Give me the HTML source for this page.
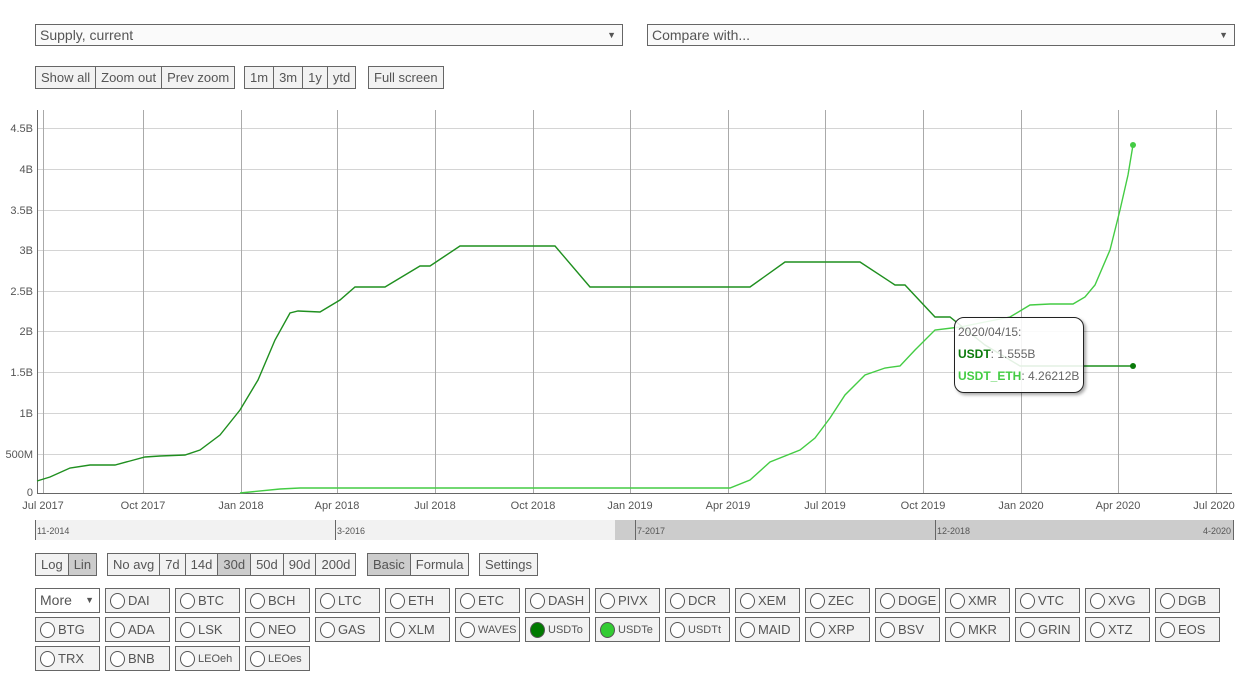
<!DOCTYPE html>
<html><head><meta charset="utf-8"><style>
*{box-sizing:border-box;margin:0;padding:0}
body{width:1256px;height:692px;background:#fff;font-family:"Liberation Sans",sans-serif;color:#555;position:relative;overflow:hidden;font-size:13px}
.a{position:absolute}
.sel{position:absolute;top:24px;height:22px;border:1px solid #666;background:#fafafa;font-size:14px;line-height:20px;padding-left:4px;color:#555}
.sel span{position:absolute;right:6px;top:0;font-size:9px}
.grp{position:absolute;display:flex;border:1px solid #666;height:23px}
.grp div{background:#f2f2f2;padding:0 5px;line-height:21px;border-left:1px solid #666;font-size:13px}
.grp div:first-child{border-left:none}
.grp div.on{background:#ccc}
.cb{position:absolute;width:65px;height:25px;border:1px solid #666;background:#f2f2f2;font-size:13px;line-height:23px;padding-left:22px}
.cb i{position:absolute;left:4px;top:4px;width:15px;height:16px;border:1px solid #555;border-radius:50%;background:#fff}
.sm{font-size:11px;line-height:24px}
</style></head><body>
<div class="sel" style="left:35px;width:588px">Supply, current<span>▼</span></div>
<div class="sel" style="left:647px;width:588px">Compare with...<span>▼</span></div>
<div class="grp" style="left:35px;top:66px"><div>Show all</div><div>Zoom out</div><div>Prev zoom</div></div>
<div class="grp" style="left:244px;top:66px"><div>1m</div><div>3m</div><div>1y</div><div>ytd</div></div>
<div class="grp" style="left:368px;top:66px"><div>Full screen</div></div>

<svg class="a" style="left:0;top:0" width="1256" height="545">
<g stroke="#d4d4d4" stroke-width="1">
<line x1="37" x2="1232" y1="128.5" y2="128.5"/><line x1="37" x2="1232" y1="169.5" y2="169.5"/><line x1="37" x2="1232" y1="210.5" y2="210.5"/><line x1="37" x2="1232" y1="250.5" y2="250.5"/><line x1="37" x2="1232" y1="291.5" y2="291.5"/><line x1="37" x2="1232" y1="331.5" y2="331.5"/><line x1="37" x2="1232" y1="372.5" y2="372.5"/><line x1="37" x2="1232" y1="413.5" y2="413.5"/><line x1="37" x2="1232" y1="454.5" y2="454.5"/>
</g>
<g stroke="#aaa" stroke-width="1">
<line x1="43.5" x2="43.5" y1="110" y2="493"/><line x1="143.5" x2="143.5" y1="110" y2="493"/><line x1="241.5" x2="241.5" y1="110" y2="493"/><line x1="337.5" x2="337.5" y1="110" y2="493"/><line x1="435.5" x2="435.5" y1="110" y2="493"/><line x1="533.5" x2="533.5" y1="110" y2="493"/><line x1="630.5" x2="630.5" y1="110" y2="493"/><line x1="728.5" x2="728.5" y1="110" y2="493"/><line x1="825.5" x2="825.5" y1="110" y2="493"/><line x1="923.5" x2="923.5" y1="110" y2="493"/><line x1="1021.5" x2="1021.5" y1="110" y2="493"/><line x1="1118.5" x2="1118.5" y1="110" y2="493"/><line x1="1216.5" x2="1216.5" y1="110" y2="493"/>
</g>
<line x1="37.5" x2="37.5" y1="110" y2="493" stroke="#666"/>
<line x1="37" x2="1232" y1="493.5" y2="493.5" stroke="#666"/>
<g font-size="11" fill="#555" text-anchor="end" font-family="Liberation Sans,sans-serif">
<text x="33" y="132">4.5B</text><text x="33" y="173">4B</text><text x="33" y="214">3.5B</text><text x="33" y="254">3B</text><text x="33" y="295">2.5B</text><text x="33" y="335">2B</text><text x="33" y="376">1.5B</text><text x="33" y="417">1B</text><text x="33" y="458">500M</text><text x="33" y="496">0</text>
</g>
<g font-size="11" fill="#555" text-anchor="middle" font-family="Liberation Sans,sans-serif">
<text x="43" y="509">Jul 2017</text><text x="143" y="509">Oct 2017</text><text x="241" y="509">Jan 2018</text><text x="337" y="509">Apr 2018</text><text x="435" y="509">Jul 2018</text><text x="533" y="509">Oct 2018</text><text x="630" y="509">Jan 2019</text><text x="728" y="509">Apr 2019</text><text x="825" y="509">Jul 2019</text><text x="923" y="509">Oct 2019</text><text x="1021" y="509">Jan 2020</text><text x="1118" y="509">Apr 2020</text><text x="1214" y="509">Jul 2020</text>
</g>
<polyline fill="none" stroke="#44cc44" stroke-width="1.4" points="240,493 280,489 300,488 730,488 750,480 770,462 800,450 815,438 830,418 845,395 865,375 885,368 900,366 915,350 935,330 960,327 985,322 1010,317 1030,305 1050,304 1073,304 1085,297 1095,285 1110,250 1120,210 1128,175 1133,145"/>
<polyline fill="none" stroke="#1f8f1f" stroke-width="1.4" points="37,481 50,477 70,468 90,465 115,465 130,461 145,457 160,456 185,455 200,450 220,435 240,410 258,380 275,340 290,313 298,311 320,312 340,300 355,287 385,287 400,278 420,266 430,266 445,256 460,246 555,246 590,287 750,287 785,262 860,262 895,285 905,285 935,317 950,317 985,345 1020,366 1133,366"/>
<circle cx="1133" cy="145" r="3" fill="#44cc44"/>
<circle cx="1133" cy="366" r="3" fill="#0a7a0a"/>
<rect x="35" y="520" width="580" height="20" fill="#f2f2f2"/>
<rect x="615" y="520" width="618" height="20" fill="#ccc"/>
<g stroke="#666"><line x1="35.5" x2="35.5" y1="520" y2="540"/><line x1="335.5" x2="335.5" y1="520" y2="540"/><line x1="635.5" x2="635.5" y1="520" y2="540"/><line x1="935.5" x2="935.5" y1="520" y2="540"/><line x1="1233.5" x2="1233.5" y1="520" y2="540"/></g>
<g font-size="9" fill="#555" font-family="Liberation Sans,sans-serif"><text x="37" y="534">11-2014</text><text x="337" y="534">3-2016</text><text x="637" y="534">7-2017</text><text x="937" y="534">12-2018</text><text x="1231" y="534" text-anchor="end">4-2020</text></g>
</svg>

<div class="a" style="left:954px;top:317px;width:130px;height:76px;border:1px solid #222;border-radius:10px;background:rgba(255,255,255,0.88);box-shadow:2px 2px 3px rgba(0,0,0,0.35);font-size:12px;line-height:22px;padding:3px 0 0 3px;color:#666">2020/04/15:<br><b style="color:#0a7a0a">USDT</b>: 1.555B<br><b style="color:#44cc44">USDT_ETH</b>: 4.26212B</div>

<div class="grp" style="left:35px;top:553px"><div>Log</div><div class="on">Lin</div></div>
<div class="grp" style="left:107px;top:553px"><div>No avg</div><div>7d</div><div>14d</div><div class="on">30d</div><div>50d</div><div>90d</div><div>200d</div></div>
<div class="grp" style="left:367px;top:553px"><div class="on">Basic</div><div>Formula</div></div>
<div class="grp" style="left:479px;top:553px"><div>Settings</div></div>

<div class="cb" style="left:35px;top:588px;background:#fff;padding-left:4px;font-size:14px">More<span style="position:absolute;right:5px;font-size:9px">▼</span></div>
<div class="cb" style="left:105px;top:588px"><i></i>DAI</div>
<div class="cb" style="left:175px;top:588px"><i></i>BTC</div>
<div class="cb" style="left:245px;top:588px"><i></i>BCH</div>
<div class="cb" style="left:315px;top:588px"><i></i>LTC</div>
<div class="cb" style="left:385px;top:588px"><i></i>ETH</div>
<div class="cb" style="left:455px;top:588px"><i></i>ETC</div>
<div class="cb" style="left:525px;top:588px"><i></i>DASH</div>
<div class="cb" style="left:595px;top:588px"><i></i>PIVX</div>
<div class="cb" style="left:665px;top:588px"><i></i>DCR</div>
<div class="cb" style="left:735px;top:588px"><i></i>XEM</div>
<div class="cb" style="left:805px;top:588px"><i></i>ZEC</div>
<div class="cb" style="left:875px;top:588px"><i></i>DOGE</div>
<div class="cb" style="left:945px;top:588px"><i></i>XMR</div>
<div class="cb" style="left:1015px;top:588px"><i></i>VTC</div>
<div class="cb" style="left:1085px;top:588px"><i></i>XVG</div>
<div class="cb" style="left:1155px;top:588px"><i></i>DGB</div>

<div class="cb" style="left:35px;top:617px"><i></i>BTG</div>
<div class="cb" style="left:105px;top:617px"><i></i>ADA</div>
<div class="cb" style="left:175px;top:617px"><i></i>LSK</div>
<div class="cb" style="left:245px;top:617px"><i></i>NEO</div>
<div class="cb" style="left:315px;top:617px"><i></i>GAS</div>
<div class="cb" style="left:385px;top:617px"><i></i>XLM</div>
<div class="cb sm" style="left:455px;top:617px"><i></i>WAVES</div>
<div class="cb sm" style="left:525px;top:617px"><i style="background:#007a00"></i>USDTo</div>
<div class="cb sm" style="left:595px;top:617px"><i style="background:#33cc33"></i>USDTe</div>
<div class="cb sm" style="left:665px;top:617px"><i></i>USDTt</div>
<div class="cb" style="left:735px;top:617px"><i></i>MAID</div>
<div class="cb" style="left:805px;top:617px"><i></i>XRP</div>
<div class="cb" style="left:875px;top:617px"><i></i>BSV</div>
<div class="cb" style="left:945px;top:617px"><i></i>MKR</div>
<div class="cb" style="left:1015px;top:617px"><i></i>GRIN</div>
<div class="cb" style="left:1085px;top:617px"><i></i>XTZ</div>
<div class="cb" style="left:1155px;top:617px"><i></i>EOS</div>

<div class="cb" style="left:35px;top:646px"><i></i>TRX</div>
<div class="cb" style="left:105px;top:646px"><i></i>BNB</div>
<div class="cb sm" style="left:175px;top:646px"><i></i>LEOeh</div>
<div class="cb sm" style="left:245px;top:646px"><i></i>LEOes</div>
</body></html>
